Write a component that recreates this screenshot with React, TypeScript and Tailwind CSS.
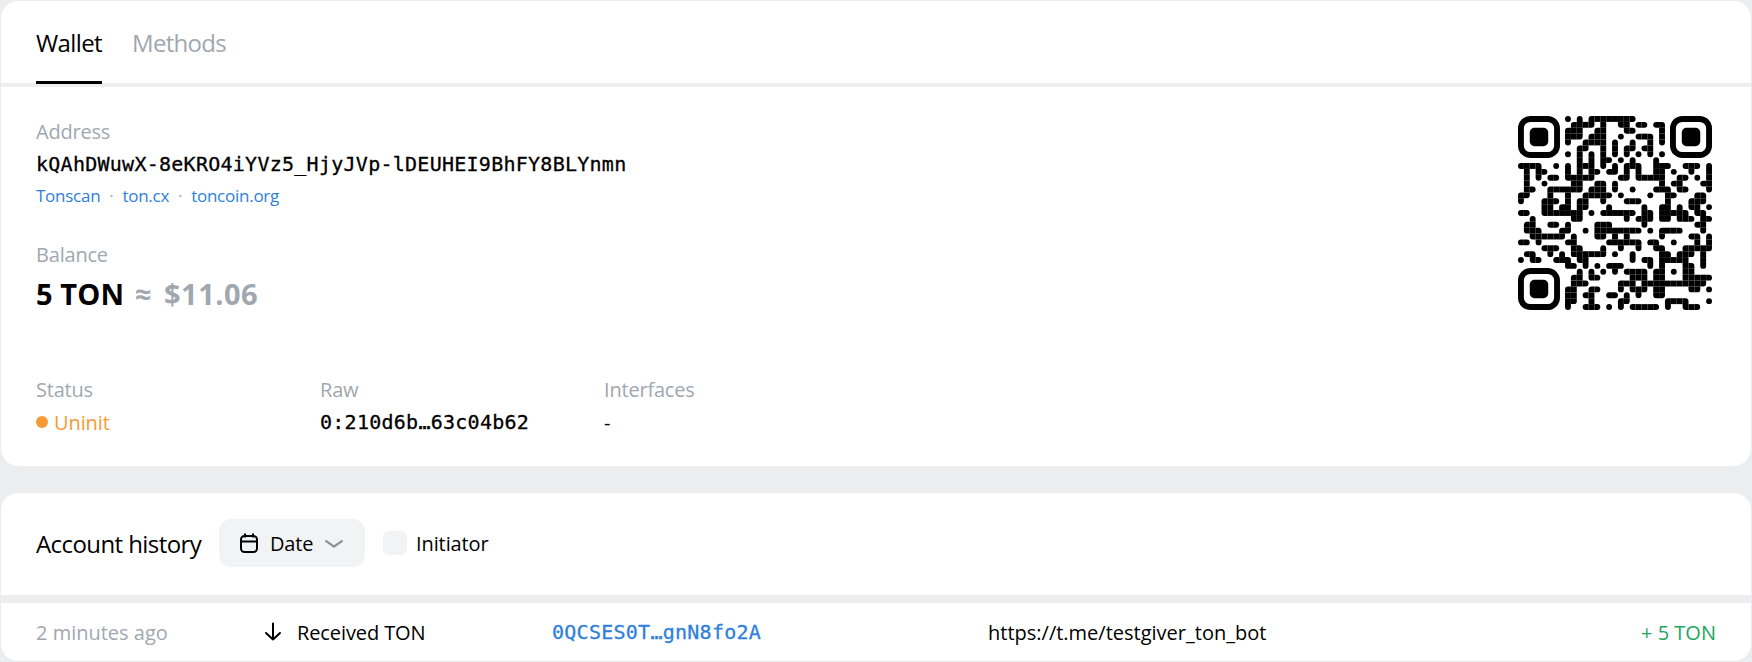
import type { ReactNode } from "react";

const ADDRESS = "kQAhDWuwX-8eKRO4iYVz5_HjyJVp-lDEUHEI9BhFY8BLYnmn";

const QR_SIZE = 33;
const DATA_WORDS = 80;
const EC_WORDS = 20;
const FORMAT = "111100010011101";

function gfMul(a: number, b: number): number {
  let r = 0;
  for (let i = 7; i >= 0; i--) {
    r = (r << 1) ^ ((r >>> 7) * 0x11d);
    if ((b >>> i) & 1) r ^= a;
  }
  return r;
}

function errorWords(data: number[]): number[] {
  const gen: number[] = new Array(EC_WORDS).fill(0);
  gen[EC_WORDS - 1] = 1;
  let root = 1;
  for (let i = 0; i < EC_WORDS; i++) {
    for (let j = 0; j < EC_WORDS; j++) {
      gen[j] = gfMul(gen[j], root);
      if (j + 1 < EC_WORDS) gen[j] ^= gen[j + 1];
    }
    root = gfMul(root, 2);
  }
  const rem: number[] = new Array(EC_WORDS).fill(0);
  for (const b of data) {
    const factor = b ^ (rem.shift() as number);
    rem.push(0);
    gen.forEach((g, i) => {
      rem[i] ^= gfMul(g, factor);
    });
  }
  return rem;
}

/** Version 4, level L, mask 3, byte mode. */
function encodeQr(text: string): boolean[][] {
  const n = QR_SIZE;
  let bits = "0100" + text.length.toString(2).padStart(8, "0");
  for (const ch of text) bits += ch.charCodeAt(0).toString(2).padStart(8, "0");
  bits += "0000";
  const words: number[] = [];
  for (let i = 0; i < bits.length; i += 8) words.push(parseInt(bits.slice(i, i + 8), 2));
  for (let pad = 0xec; words.length < DATA_WORDS; pad ^= 0xec ^ 0x11) words.push(pad);
  const stream = [...words, ...errorWords(words)];

  const m: boolean[][] = Array.from({ length: n }, () => new Array(n).fill(false));
  const fixed: boolean[][] = Array.from({ length: n }, () => new Array(n).fill(false));
  const put = (r: number, c: number, v: boolean) => {
    if (r < 0 || c < 0 || r >= n || c >= n) return;
    m[r][c] = v;
    fixed[r][c] = true;
  };

  for (let i = 0; i < n; i++) {
    put(6, i, i % 2 === 0);
    put(i, 6, i % 2 === 0);
  }
  for (const [cr, cc] of [[3, 3], [3, n - 4], [n - 4, 3]]) {
    for (let dr = -4; dr <= 4; dr++)
      for (let dc = -4; dc <= 4; dc++) {
        const d = Math.max(Math.abs(dr), Math.abs(dc));
        put(cr + dr, cc + dc, d !== 2 && d !== 4);
      }
  }
  for (let dr = -2; dr <= 2; dr++)
    for (let dc = -2; dc <= 2; dc++)
      put(26 + dr, 26 + dc, Math.max(Math.abs(dr), Math.abs(dc)) !== 1);

  const f = (i: number) => FORMAT[i] === "1";
  for (let i = 0; i < 6; i++) put(8, i, f(i));
  put(8, 7, f(6));
  put(8, 8, f(7));
  put(7, 8, f(8));
  for (let i = 9; i < 15; i++) put(14 - i, 8, f(i));
  for (let i = 0; i < 7; i++) put(n - 1 - i, 8, f(i));
  for (let i = 7; i < 15; i++) put(8, n - 15 + i, f(i));
  put(n - 8, 8, true);

  let k = 0;
  for (let right = n - 1; right >= 1; right -= 2) {
    if (right === 6) right = 5;
    for (let v = 0; v < n; v++)
      for (let j = 0; j < 2; j++) {
        const c = right - j;
        const up = ((right + 1) & 2) === 0;
        const r = up ? n - 1 - v : v;
        if (fixed[r][c]) continue;
        const bit = k < stream.length * 8 && ((stream[k >>> 3] >>> (7 - (k & 7))) & 1) === 1;
        k++;
        m[r][c] = bit !== ((r + c) % 3 === 0);
      }
  }
  return m;
}

const inFinder = (r: number, c: number) =>
  (r < 7 && c < 7) || (r < 7 && c >= QR_SIZE - 7) || (r >= QR_SIZE - 7 && c < 7);

function QrCode({ value }: { value: string }) {
  const m = encodeQr(value);
  const on = (r: number, c: number) => Boolean(m[r]?.[c]) && !inFinder(r, c);
  const cells: ReactNode[] = [];
  m.forEach((row, r) =>
    row.forEach((_, c) => {
      if (!on(r, c)) return;
      const t = on(r - 1, c);
      const b = on(r + 1, c);
      const l = on(r, c - 1);
      const g = on(r, c + 1);
      const q = (a: boolean, d: boolean) => (a || d ? 0 : 0.5);
      const tl = q(t, l);
      const tr = q(t, g);
      const br = q(b, g);
      const bl = q(b, l);
      cells.push(
        <path
          key={`${r}-${c}`}
          d={`M${c + tl} ${r}H${c + 1 - tr}a${tr} ${tr} 0 0 1 ${tr} ${tr}V${r + 1 - br}a${br} ${br} 0 0 1 ${-br} ${br}H${c + bl}a${bl} ${bl} 0 0 1 ${-bl} ${-bl}V${r + tl}a${tl} ${tl} 0 0 1 ${tl} ${-tl}z`}
        />,
      );
    }),
  );
  return (
    <svg className="h-[194px] w-[194px] shrink-0" viewBox="0 0 33 33" fill="#000">
      {cells}
      {[[0, 0], [25.86, 0], [0, 25.86]].map(([x, y]) => (
        <g key={`${x}-${y}`}>
          <rect x={x + 0.5} y={y + 0.5} width="6.14" height="6.14" rx="1.6" fill="none" stroke="#000" />
          <rect x={x + 2} y={y + 2} width="3.14" height="3.14" rx="0.8" />
        </g>
      ))}
    </svg>
  );
}

function Field({ label, className, children }: { label: string; className?: string; children: ReactNode }) {
  return (
    <div className={className}>
      <div className="leading-8 tracking-[-0.2px] text-[#a1a7af]">{label}</div>
      {children}
    </div>
  );
}

const Dot = () => <span className="w-[22px] text-center text-[#a1a7af]">·</span>;

export default function App() {
  return (
    <div className="flex h-[662px] flex-col gap-[26px] overflow-hidden bg-[#ecedef] font-['Open_Sans','Noto_Sans',sans-serif] text-xl text-black">
      <section className="h-[466px] rounded-[18px] border border-b-0 border-[#ebecee] bg-white">
        <nav className="flex h-[86px] gap-[30px] border-b-4 border-[#eeeeef] px-[35px] text-2xl leading-[83px]">
          <a className="relative w-[66px] tracking-[-0.6px]">
            Wallet
            <span className="absolute top-20 left-0 h-[3px] w-full bg-black" />
          </a>
          <a className="tracking-[-0.7px] text-[#a1a7af]">Methods</a>
        </nav>
        <div className="flex items-start justify-between pt-[29px] pr-[39px] pl-[35px]">
          <div>
            <Field label="Address">
              <div className="font-['DejaVu_Sans_Mono',monospace] leading-8 tracking-[0.26px] [-webkit-text-stroke:0.3px]">{ADDRESS}</div>
              <div className="flex text-[17px] leading-8 tracking-[-0.25px] text-[#2e7fdc]">
                <a>Tonscan</a>
                <Dot />
                <a>ton.cx</a>
                <Dot />
                <a>toncoin.org</a>
              </div>
            </Field>
            <Field label="Balance" className="mt-[27px]">
              <div className="mt-[3px] flex text-[29px] leading-10 font-bold">
                <span className="w-[99px] tracking-[0.1px]">5 TON</span>
                <span className="w-[29px] text-[#a1a7af]">≈</span>
                <span className="tracking-[0.5px] text-[#a1a7af]">$11.06</span>
              </div>
            </Field>
          </div>
          <QrCode value={`ton://transfer/${ADDRESS}`} />
        </div>
        <div className="mt-[60px] flex px-[35px]">
          <Field label="Status" className="w-[284px]">
            <div className="mt-px flex items-center gap-[6px] leading-8 text-[#f69a35]">
              <span className="mb-[3px] h-3 w-3 rounded-full bg-[#f69a35]" />
              <span className="tracking-[-0.1px]">Uninit</span>
            </div>
          </Field>
          <Field label="Raw" className="w-[284px]">
            <div className="font-['DejaVu_Sans_Mono',monospace] leading-8 tracking-[0.26px] [-webkit-text-stroke:0.3px]">0:210d6b…63c04b62</div>
          </Field>
          <Field label="Interfaces">
            <div className="mt-px leading-8">-</div>
          </Field>
        </div>
      </section>

      <section className="h-[170px] rounded-[18px] border border-[#ebecee] bg-white">
        <header className="flex h-[110px] items-center border-b-8 border-[#ecedef] px-[35px]">
          <h2 className="w-[183px] text-2xl tracking-[-0.58px] whitespace-nowrap">Account history</h2>
          <button className="mb-[2px] flex h-12 w-[146px] items-center rounded-xl bg-[#f1f3f5] pl-[21px]">
            <svg className="h-5 w-[18px]" viewBox="0 0 18 20" fill="none" stroke="#000" strokeWidth="2">
              <rect x="1" y="3" width="16" height="16" rx="3.5" />
              <path d="M1 8.5h16M5 0.5v4M13 0.5v4" />
            </svg>
            <span className="mt-[2px] ml-[12px] w-[55px] text-left tracking-[-0.2px]">Date</span>
            <svg className="mt-px h-2 w-[18px]" viewBox="0 0 18 8" fill="none" stroke="#88909b" strokeWidth="2.2" strokeLinecap="round" strokeLinejoin="round">
              <path d="M1.2 1.2L9 6.6l7.8-5.4" />
            </svg>
          </button>
          <label className="ml-[18px] flex items-center gap-[9px]">
            <span className="mb-[2px] h-6 w-6 rounded-md bg-[#f1f3f5]" />
            <span className="tracking-[-0.1px]">Initiator</span>
          </label>
        </header>
        <div className="flex h-[58px] items-center px-[35px]">
          <span className="mt-[2px] w-[228px] text-[#a1a7af]">2 minutes ago</span>
          <svg className="mr-[15px] h-5 w-[18px]" viewBox="0 0 18 20" fill="none" stroke="#000" strokeWidth="2" strokeLinecap="round" strokeLinejoin="round">
            <path d="M9 1.5v16M2 11l7 6.5L16 11" />
          </svg>
          <span className="mt-[2px] w-[255px] tracking-[-0.1px]">Received TON</span>
          <a className="w-[436px] font-['DejaVu_Sans_Mono',monospace] tracking-[0.26px] text-[#2e7fdc] [-webkit-text-stroke:0.3px]">0QCSES0T…gnN8fo2A</a>
          <span className="mt-[2px]">https://t.me/testgiver_ton_bot</span>
          <span className="mt-[2px] ml-auto text-[#1da662]">+ 5 TON</span>
        </div>
      </section>
    </div>
  );
}
